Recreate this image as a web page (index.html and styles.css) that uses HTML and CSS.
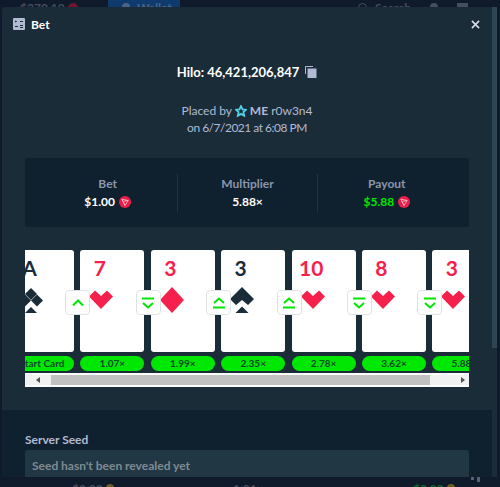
FILE: index.html
```html
<!DOCTYPE html>
<html lang="en">
<head>
    <meta charset="UTF-8">
    <title>Bet</title>
    <link rel="stylesheet" href="styles.css">
</head>
<body>
    <svg width="0" height="0" class="defs">
        <defs>
            <symbol id="heart" viewBox="0 0 24 20"><polygon points="0,6.5 6,0.5 12,6 18,0.5 24,6.5 12,19"/></symbol>
            <symbol id="diamond" viewBox="0 0 24 26"><polygon points="12,0 24,13 12,26 0,13"/></symbol>
            <symbol id="spade" viewBox="0 0 24 26"><polygon points="12,0 24,12 18,18 12,13 6,18 0,12"/><polygon points="5.5,26 12,19.5 18.5,26"/></symbol>
            <symbol id="club" viewBox="0 0 24 26"><polygon points="12,1 18,7 12,13 6,7"/><polygon points="6,7.500 12,13.500 6,19.500 0,13.500"/><polygon points="18,7.500 24,13.500 18,19.500 12,13.500"/><polygon points="6,26 12,20 18,26"/></symbol>
            <symbol id="up" viewBox="0 0 16 16"><path d="M3 10.500 8 5.500l5 5" fill="none" stroke="#00e701" stroke-width="2"/></symbol>
            <symbol id="upeq" viewBox="0 0 16 16"><path d="M3 8 8 3.500 13 8" fill="none" stroke="#00e701" stroke-width="2"/><path d="M2 12.500h12" stroke="#00e701" stroke-width="2"/></symbol>
            <symbol id="downeq" viewBox="0 0 16 16"><path d="M2 3.500h12" stroke="#00e701" stroke-width="2"/><path d="M3 8 8 12.500 13 8" fill="none" stroke="#00e701" stroke-width="2"/></symbol>
            <symbol id="tron" viewBox="0 0 12 12"><circle cx="6" cy="6" r="6" fill="#ed1d49"/><path d="M3 3.200 9.200 4.500 6 9.500Z M3 3.200 6 9.500 M9.200 4.500 5 5.200" fill="none" stroke="#ffd0da" stroke-width=".7"/></symbol>
        </defs>
    </svg>

    <div class="page">
        <div class="behind-top">
            <span class="behind-balance">$370.19</span>
            <span class="behind-dot"></span>
            <span class="behind-wallet"><i class="behind-person"></i>Wallet</span>
            <span class="behind-search"><i class="behind-ring"></i>Search</span>
            <i class="behind-person right"></i>
            <i class="behind-box"></i>
        </div>

        <div class="modal-row">
            <div class="modal">
                <div class="modal-top">
                    <div class="modal-head">
                        <div class="modal-title">
                            <svg class="title-icon" viewBox="0 0 12 12"><rect width="12" height="12" rx="1" fill="#b1bad3"/><path d="M2 3.500h1.500M2.800 2.700v1.600M7 3.500h3M2 8.500h3M7 7.500h3M7 9.500h3" stroke="#1a2c38" stroke-width="1"/></svg>
                            <span>Bet</span>
                        </div>
                        <svg class="close-icon" viewBox="0 0 10 10"><path d="M1 1 9 9M9 1 1 9" stroke="#d5dceb" stroke-width="1.800"/></svg>
                    </div>

                    <div class="bet-id">
                        <span>Hilo: 46,421,206,847</span>
                        <svg class="copy-icon" viewBox="0 0 12 12"><path d="M.5 8V.5H8" fill="none" stroke="#b1bad3"/><rect x="2.500" y="2.500" width="9" height="9.500" fill="#b1bad3"/></svg>
                    </div>

                    <div class="placed">
                        <div class="placed-line">Placed by
                            <svg class="star-icon" viewBox="0 0 12 12"><polygon points="6,1 7.500,4.300 11,4.700 8.400,7 9.200,10.800 6,8.900 2.800,10.800 3.600,7 1,4.700 4.500,4.300" fill="none" stroke="#4fd2e4" stroke-width="1.800"/></svg>
                            <b>ME</b> r0w3n4
                        </div>
                        <div class="placed-date">on 6/7/2021 at 6:08 PM</div>
                    </div>

                    <div class="stats">
                        <div class="stat">
                            <div class="stat-label">Bet</div>
                            <div class="stat-value">$1.00 <svg class="tron"><use href="#tron"/></svg></div>
                        </div>
                        <div class="stat">
                            <div class="stat-label">Multiplier</div>
                            <div class="stat-value">5.88×</div>
                        </div>
                        <div class="stat">
                            <div class="stat-label">Payout</div>
                            <div class="stat-value win">$5.88 <svg class="tron"><use href="#tron"/></svg></div>
                        </div>
                    </div>

                    <div class="hand">
                        <div class="hand-track">
                            <div class="hand-col">
                                <div class="card dark"><div class="rank">A</div><svg class="suit"><use href="#club"/></svg></div>
                                <div class="pill">Start Card</div>
                            </div>
                            <div class="hand-col">
                                <div class="card"><div class="rank">7</div><svg class="suit"><use href="#heart"/></svg>
                                    <div class="guess"><svg><use href="#up"/></svg></div></div>
                                <div class="pill">1.07×</div>
                            </div>
                            <div class="hand-col">
                                <div class="card"><div class="rank">3</div><svg class="suit"><use href="#diamond"/></svg>
                                    <div class="guess"><svg><use href="#downeq"/></svg></div></div>
                                <div class="pill">1.99×</div>
                            </div>
                            <div class="hand-col">
                                <div class="card dark"><div class="rank">3</div><svg class="suit"><use href="#spade"/></svg>
                                    <div class="guess"><svg><use href="#upeq"/></svg></div></div>
                                <div class="pill">2.35×</div>
                            </div>
                            <div class="hand-col">
                                <div class="card"><div class="rank">10</div><svg class="suit"><use href="#heart"/></svg>
                                    <div class="guess"><svg><use href="#upeq"/></svg></div></div>
                                <div class="pill">2.78×</div>
                            </div>
                            <div class="hand-col">
                                <div class="card"><div class="rank">8</div><svg class="suit"><use href="#heart"/></svg>
                                    <div class="guess"><svg><use href="#downeq"/></svg></div></div>
                                <div class="pill">3.62×</div>
                            </div>
                            <div class="hand-col">
                                <div class="card"><div class="rank">3</div><svg class="suit"><use href="#heart"/></svg>
                                    <div class="guess"><svg><use href="#downeq"/></svg></div></div>
                                <div class="pill">5.88×</div>
                            </div>
                        </div>
                    </div>

                    <div class="hscroll">
                        <span class="arrow-left"></span>
                        <div class="hscroll-thumb"></div>
                        <span class="arrow-right"></span>
                    </div>
                </div>

                <div class="modal-bottom">
                    <div class="seed-label">Server Seed</div>
                    <div class="seed-box">Seed hasn't been revealed yet</div>
                </div>
            </div>
            <div class="modal-scroll"><div class="modal-scroll-thumb"></div></div>
        </div>

        <div class="behind-bottom">
            <span class="behind-amount">$0.00</span>
            <i class="behind-coin"></i>
            <span class="behind-odds">1.01×</span>
            <span class="behind-amount green">$0.00</span>
            <i class="behind-coin"></i>
            <span class="behind-marks"><i></i><i></i></span>
        </div>
    </div>
</body>
</html>
```

FILE: styles.css
```css
* {
    box-sizing: border-box;
}
body {
    margin: 0;
    background: #0f1a2b;
    font-family: Lato, "Liberation Sans", sans-serif;
    font-size: 12px;
}
.defs {
    position: absolute;
}
.page {
    width: 500px;
    height: 487px;
    overflow: hidden;
    display: flex;
    flex-direction: column;
}

/* the site behind the dialog, only edges show */
.behind-top {
    height: 7px;
    flex: none;
    overflow: hidden;
    display: flex;
    color: #444e5e;
    font-weight: 700;
    line-height: 12px;
    padding-left: 20px;
}
.behind-balance {
    width: 48px;
    margin-top: 2px;
}
.behind-dot {
    width: 10px;
    height: 10px;
    margin-top: 3px;
    border-radius: 50%;
    background: #6e1530;
}
.behind-wallet {
    display: flex;
    width: 72px;
    margin-left: 30px;
    padding: 2px 0 0 14px;
    background: #0f3a6e;
    color: #4a6488;
}
.behind-person {
    width: 8px;
    height: 8px;
    margin: 1px 7px 0 0;
    border-radius: 50%;
    background: #4a6488;
}
.behind-search {
    display: flex;
    margin: 2px 0 0 178px;
    width: 72px;
}
.behind-ring {
    width: 9px;
    height: 9px;
    margin: 1px 8px 0 0;
    border: 1.500px solid #444e5e;
    border-radius: 50%;
}
.behind-person.right {
    margin: 3px 0 0 0;
    background: #444e5e;
}
.behind-box {
    width: 11px;
    height: 8px;
    margin: 3px 0 0 19px;
    background: #444e5e;
}
.behind-bottom {
    height: 10px;
    flex: none;
    overflow: hidden;
    display: flex;
    color: #444e5e;
    font-weight: 700;
    padding-left: 72px;
    line-height: 12px;
}
.behind-amount,
.behind-odds {
    margin-top: 6px;
}
.behind-amount {
    width: 28px;
}
.behind-coin {
    width: 8px;
    height: 8px;
    margin: 7px 0 0 6px;
    border-radius: 50%;
    background: #6b5a22;
}
.behind-odds {
    margin-left: 119px;
    width: 30px;
}
.behind-amount.green {
    margin-left: 150px;
    color: #0d6b2a;
}
.behind-marks {
    display: flex;
    gap: 3px;
    margin-left: 16px;
}
.behind-marks i {
    width: 3px;
    height: 3px;
    background: #55617a;
}
.behind-marks i + i {
    height: 5px;
}

.modal-row {
    height: 470px;
    flex: none;
    margin-left: 2px;
    display: flex;
}
.modal {
    width: 490px;
    display: flex;
    flex-direction: column;
    background: #1a2c38;
    border-radius: 4px 0 0 0;
    overflow: hidden;
}
.modal-scroll {
    width: 5px;
    background: #1a2c38;
}
.modal-scroll-thumb {
    height: 341px;
    background: #2f4553;
}
.modal-top {
    height: 403px;
    flex: none;
    padding: 0 23px;
}
.modal-head {
    height: 34px;
    margin: 0 -11px 0 -12px;
    display: flex;
    justify-content: space-between;
    align-items: center;
}
.modal-title {
    display: flex;
    align-items: center;
    gap: 6px;
    color: #fff;
    font-weight: 700;
}
.title-icon {
    width: 12px;
    height: 12px;
}
.close-icon {
    width: 9px;
    height: 9px;
}
.bet-id {
    margin-top: 23px;
    display: flex;
    justify-content: center;
    align-items: center;
    gap: 6px;
    color: #fff;
    font-size: 13px;
    font-weight: 700;
    line-height: 16px;
}
.copy-icon {
    width: 12px;
    height: 12px;
}
.placed {
    margin-top: 22px;
    text-align: center;
    color: #b1bad3;
    line-height: 17px;
}
.placed b {
    font-weight: 700;
}
.placed-date {
    letter-spacing: -.5px;
}
.star-icon {
    width: 12px;
    height: 12px;
    vertical-align: -2px;
}
.stats {
    margin-top: 22px;
    height: 69px;
    background: #0f212e;
    border-radius: 3px;
    display: grid;
    grid-template-columns: 1fr 1fr 1fr;
    padding: 16px 13px;
}
.stat {
    border-left: 1px solid #1f3442;
    text-align: center;
    font-weight: 700;
}
.stat:first-child {
    border-left: none;
}
.stat-label {
    color: #8a96ad;
    line-height: 17px;
    margin-top: 1px;
}
.stat-value {
    color: #fff;
    line-height: 20px;
    display: flex;
    justify-content: center;
    align-items: center;
    gap: 4px;
    font-size: 12px;
}
.stat-value.win {
    color: #00e701;
}
.tron {
    width: 12px;
    height: 12px;
}

.hand {
    margin-top: 23px;
    overflow: hidden;
    height: 123px;
}
.hand-track {
    display: flex;
    gap: 6.400px;
    margin-left: -15px;
    width: 520px;
}
.hand-col {
    width: 64px;
    flex: none;
}
.card {
    position: relative;
    height: 102px;
    background: #fff;
    border-radius: 3px;
    color: #f5214c;
    fill: #f5214c;
    padding-left: 9px;
}
.card.dark {
    color: #1a2c38;
    fill: #1a2c38;
}
.rank {
    width: 24px;
    margin-left: -1.500px;
    text-align: center;
    font-size: 21px;
    font-weight: 700;
    line-height: 26px;
    padding-top: 5px;
    height: 37px;
    white-space: nowrap;
}
.suit {
    display: block;
    width: 24px;
    height: 26px;
}
.guess {
    position: absolute;
    left: -15px;
    top: 40px;
    width: 25px;
    height: 25px;
    background: #fff;
    border: 1px solid #e0e3e6;
    border-radius: 4px;
    display: flex;
    justify-content: center;
    align-items: center;
}
.guess svg {
    width: 16px;
    height: 16px;
}
.pill {
    margin-top: 4px;
    height: 15px;
    border-radius: 8px;
    background: #00e701;
    color: #0a4a2a;
    font-size: 10px;
    font-weight: 700;
    line-height: 15px;
    text-align: center;
    white-space: nowrap;
}
.hscroll {
    height: 14px;
    background: #f1f1f1;
    border-top: 2px solid #fff;
    border-bottom: 2px solid #fff;
    display: flex;
    align-items: center;
}
.arrow-left,
.arrow-right {
    width: 26px;
    display: flex;
    justify-content: center;
}
.arrow-left::before {
    content: "";
    border: 3px solid transparent;
    border-right: 4px solid #505050;
    border-left: none;
}
.arrow-right {
    width: 39px;
    justify-content: flex-end;
    padding-right: 4px;
}
.arrow-right::before {
    content: "";
    border: 3px solid transparent;
    border-left: 4px solid #505050;
    border-right: none;
}
.hscroll-thumb {
    flex: 1;
    height: 100%;
    background: #c1c1c1;
}

.modal-bottom {
    flex: 1;
    min-height: 0;
    background: #0f212e;
    padding: 22px 23px 0;
}
.seed-label {
    color: #b1bad3;
    font-weight: 700;
    line-height: 16px;
}
.seed-box {
    margin-top: 2px;
    height: 27px;
    background: #213743;
    border-radius: 3px 3px 0 0;
    color: #7f8b94;
    font-weight: 700;
    line-height: 16px;
    padding: 8px 7px 0;
}
```
